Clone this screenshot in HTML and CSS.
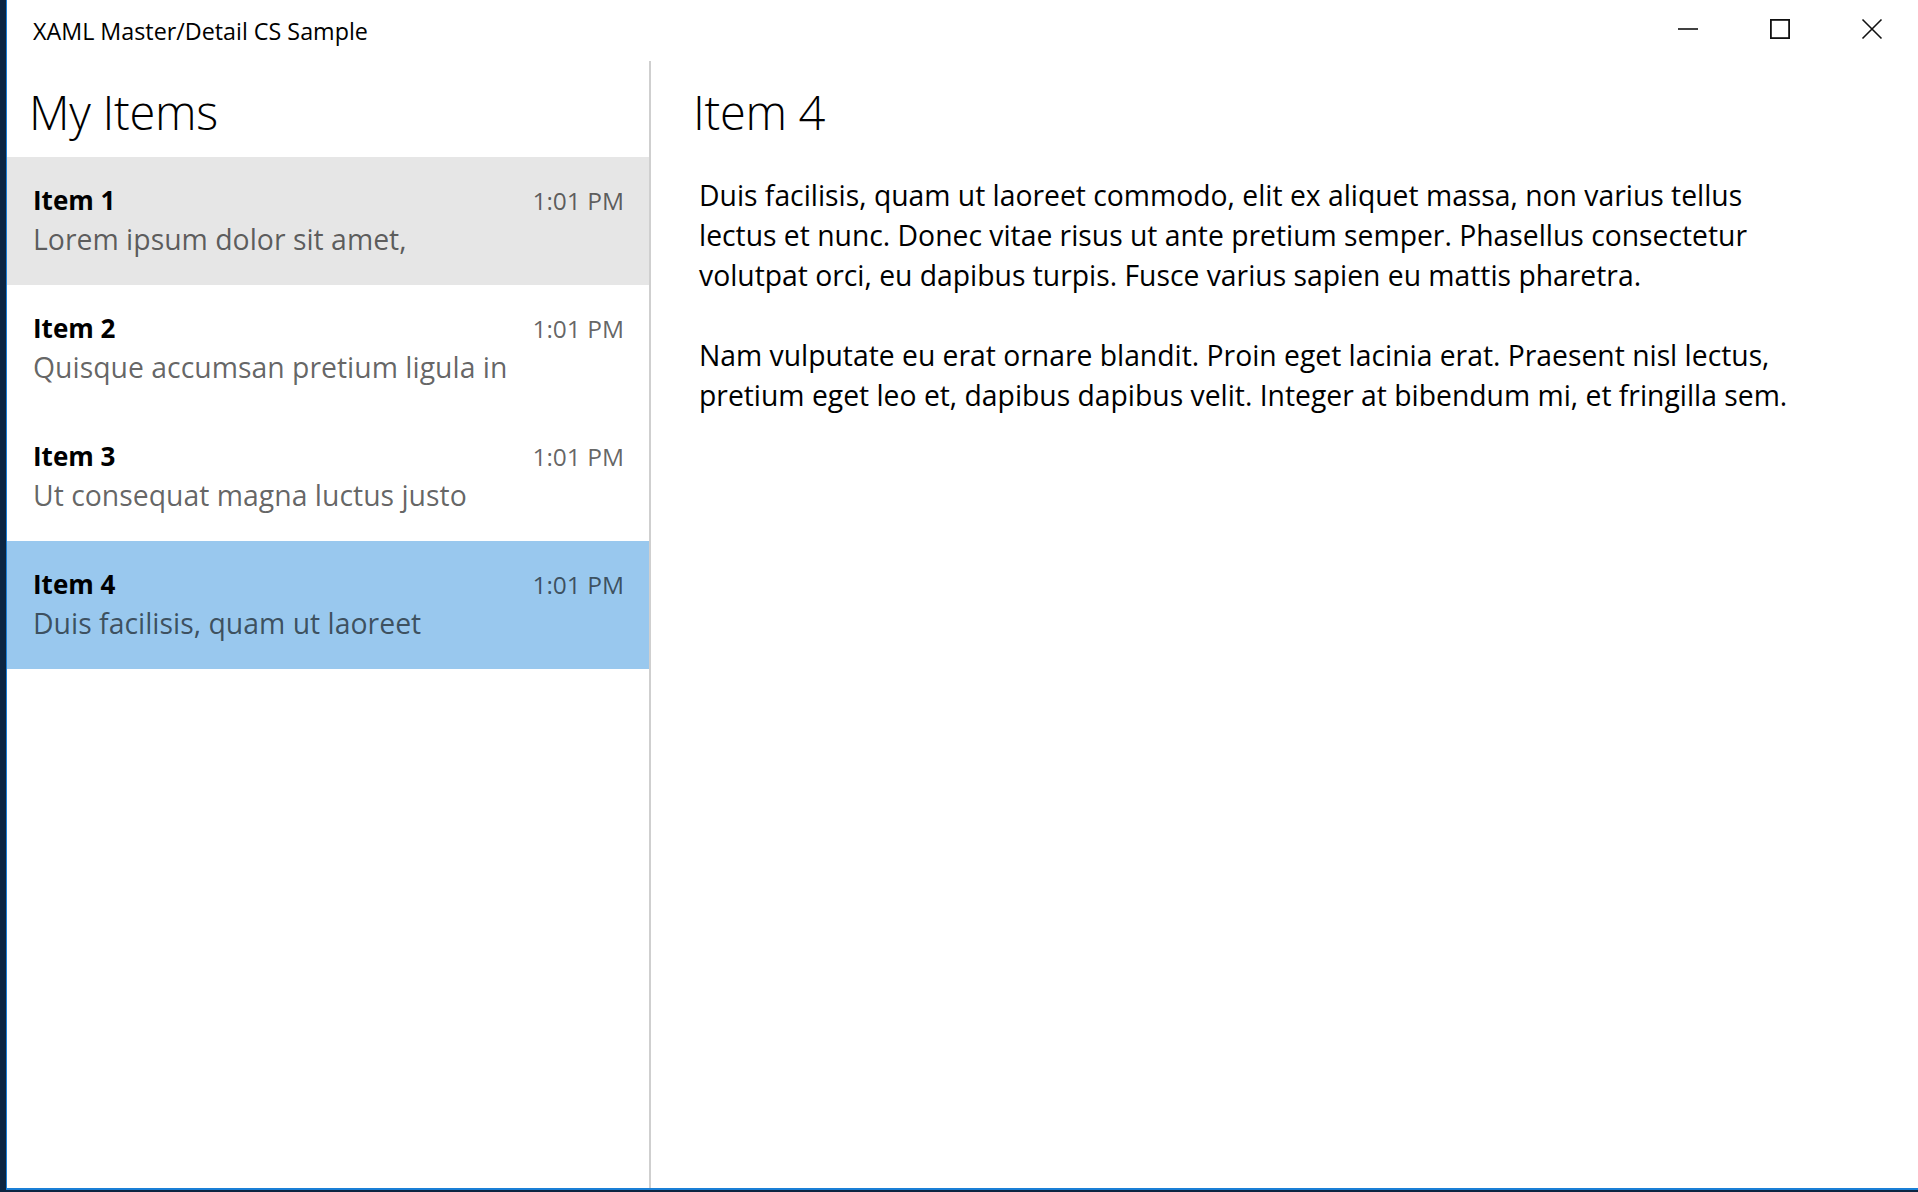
FILE: index.html
```html
<!DOCTYPE html>
<html lang="en">
<head>
<meta charset="utf-8">
<title>XAML Master/Detail CS Sample</title>
<link rel="stylesheet" href="styles.css">
</head>
<body>
<div class="window">
  <header class="titlebar">
    <div class="app-title">XAML Master/Detail CS Sample</div>
    <div class="caption-buttons">
      <div class="cap-btn">
        <svg width="22" height="22" viewBox="0 0 22 22"><line x1="1" y1="11" x2="21" y2="11" stroke="#111" stroke-width="1.6"/></svg>
      </div>
      <div class="cap-btn">
        <svg width="22" height="22" viewBox="0 0 22 22"><rect x="1.9" y="1.9" width="18.2" height="18.2" fill="none" stroke="#111" stroke-width="1.8"/></svg>
      </div>
      <div class="cap-btn">
        <svg width="22" height="22" viewBox="0 0 22 22"><path d="M1.5 1.5 L20.5 20.5 M20.5 1.5 L1.5 20.5" stroke="#111" stroke-width="1.6" fill="none"/></svg>
      </div>
    </div>
  </header>
  <main class="content">
    <section class="master">
      <h1 class="pane-title">My Items</h1>
      <ul class="item-list">
        <li class="item hover">
          <div class="item-top"><span class="item-name">Item 1</span><span class="item-time">1:01 PM</span></div>
          <div class="item-sub">Lorem ipsum dolor sit amet,</div>
        </li>
        <li class="item">
          <div class="item-top"><span class="item-name">Item 2</span><span class="item-time">1:01 PM</span></div>
          <div class="item-sub">Quisque accumsan pretium ligula in</div>
        </li>
        <li class="item">
          <div class="item-top"><span class="item-name">Item 3</span><span class="item-time">1:01 PM</span></div>
          <div class="item-sub">Ut consequat magna luctus justo</div>
        </li>
        <li class="item selected">
          <div class="item-top"><span class="item-name">Item 4</span><span class="item-time">1:01 PM</span></div>
          <div class="item-sub">Duis facilisis, quam ut laoreet</div>
        </li>
      </ul>
    </section>
    <div class="divider"></div>
    <section class="detail">
      <h2 class="pane-title detail-title">Item 4</h2>
      <p class="detail-text">Duis facilisis, quam ut laoreet commodo, elit ex aliquet massa, non varius tellus<br>lectus et nunc. Donec vitae risus ut ante pretium semper. Phasellus consectetur<br>volutpat orci, eu dapibus turpis. Fusce varius sapien eu mattis pharetra.</p>
      <p class="detail-text second">Nam vulputate eu erat ornare blandit. Proin eget lacinia erat. Praesent nisl lectus,<br>pretium eget leo et, dapibus dapibus velit. Integer at bibendum mi, et fringilla sem.</p>
    </section>
  </main>
</div>
</body>
</html>
```
FILE: styles.css
```css
* { box-sizing: border-box; }

html, body {
  margin: 0;
  padding: 0;
  height: 100%;
}

body {
  background: #0c2542;
  font-family: "Open Sans", "Noto Sans", "Liberation Sans", sans-serif;
  color: #000;
  overflow: hidden;
}

.window {
  margin-left: 6px;
  height: 1190px;
  background: #fff;
  border-left: 1px solid #1a7fd6;
  border-bottom: 2px solid #1a7fd6;
  display: flex;
  flex-direction: column;
}

.titlebar {
  height: 61px;
  flex: none;
  display: flex;
  align-items: flex-start;
  justify-content: space-between;
}

.app-title {
  padding-left: 26px;
  padding-top: 17px;
  font-size: 23.3px;
  line-height: 28px;
}

.caption-buttons {
  display: flex;
}

.cap-btn {
  width: 92px;
  height: 58px;
  display: flex;
  align-items: center;
  justify-content: center;
}

.cap-btn svg { display: block; }

.content {
  flex: 1;
  display: flex;
  min-height: 0;
}

.master {
  width: 642px;
  flex: none;
  display: flex;
  flex-direction: column;
}

.divider {
  width: 2px;
  flex: none;
  background: #cfcfcf;
}

.pane-title {
  margin: 0;
  padding: 21px 0 0 22px;
  height: 96px;
  font-size: 47px;
  font-weight: 300;
  line-height: 60px;
  letter-spacing: -0.3px;
}

.item-list {
  list-style: none;
  margin: 0;
  padding: 0;
}

.item {
  height: 128px;
  padding: 27px 25px 0 26px;
}

.item.hover { background: #e6e6e6; }
.item.selected { background: #99c8ee; }

.item-top {
  display: flex;
  justify-content: space-between;
  align-items: baseline;
}

.item-name {
  font-size: 26px;
  font-weight: 700;
  line-height: 32px;
}

.item-time {
  font-size: 24.5px;
  line-height: 32px;
  color: rgba(0, 0, 0, 0.62);
}

.item-sub {
  font-size: 28.4px;
  line-height: 44px;
  color: rgba(0, 0, 0, 0.62);
  white-space: nowrap;
}

.detail {
  flex: 1;
  min-width: 0;
}

.detail-title {
  padding-left: 42px;
}

.detail-text {
  margin: 18px 0 0 48px;
  font-size: 28.3px;
  line-height: 40px;
  white-space: nowrap;
}

.detail-text.second {
  margin-top: 40px;
}
```
